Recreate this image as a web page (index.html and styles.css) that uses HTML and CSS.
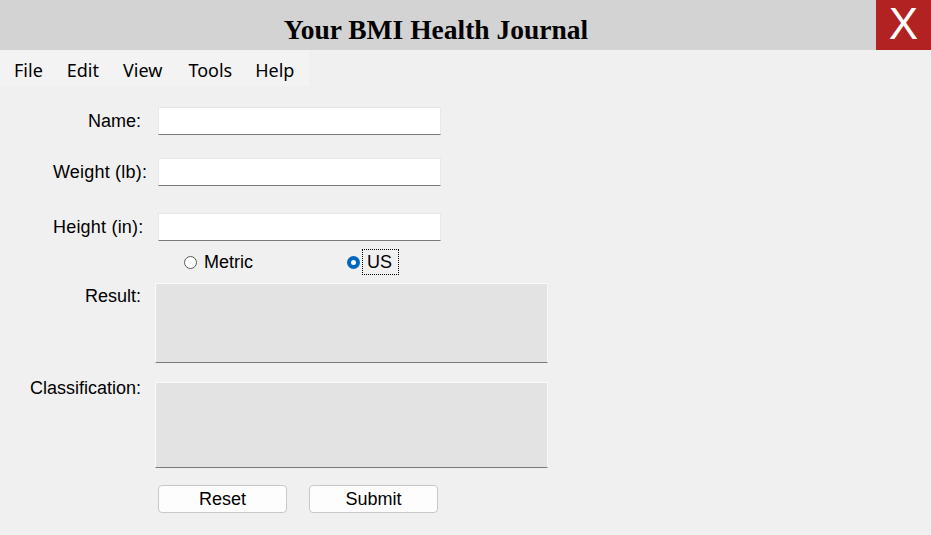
FILE: index.html
```html
<!DOCTYPE html>
<html>
<head>
<meta charset="utf-8">
<link rel="stylesheet" href="styles.css">
</head>
<body>
<header class="titlebar">
  <h1 class="title">Your BMI Health Journal</h1>
  <div class="close">X</div>
</header>
<nav class="menubar">
  <span class="menu-item">File</span>
  <span class="menu-item">Edit</span>
  <span class="menu-item">View</span>
  <span class="menu-item">Tools</span>
  <span class="menu-item">Help</span>
</nav>
<main class="form">
  <div class="row row-name">
    <label class="label">Name:</label>
    <div class="input"></div>
  </div>
  <div class="row row-weight">
    <label class="label label-wide">Weight (lb):</label>
    <div class="input"></div>
  </div>
  <div class="row row-height">
    <label class="label label-wide">Height (in):</label>
    <div class="input"></div>
  </div>
  <div class="radios">
    <div class="radio-item radio-metric">
      <span class="radio"></span>
      <span class="radio-text">Metric</span>
    </div>
    <div class="radio-item radio-us">
      <span class="radio radio-on"></span>
      <span class="radio-text focus">US</span>
    </div>
  </div>
  <div class="row row-result">
    <label class="label label-top">Result:</label>
    <div class="output output-result"></div>
  </div>
  <div class="row row-class">
    <label class="label label-top">Classification:</label>
    <div class="output output-class"></div>
  </div>
  <div class="buttons">
    <button class="btn">Reset</button>
    <button class="btn">Submit</button>
  </div>
</main>
</body>
</html>
```
FILE: styles.css
```css
* { box-sizing: border-box; }
html, body { margin: 0; padding: 0; }
body {
  background: #f0f0f0;
  width: 931px;
  height: 535px;
  overflow: hidden;
  font-family: "Liberation Sans", Arial, sans-serif;
  color: #000;
}
.titlebar {
  display: flex;
  height: 50px;
  background: #d3d3d3;
}
.title {
  flex: 1;
  margin: 0;
  text-align: center;
  font-family: "Liberation Serif", "Times New Roman", serif;
  font-weight: bold;
  font-size: 27.5px;
  line-height: 60px;
  padding-right: 4px;
}
.close {
  width: 55px;
  height: 50px;
  display: flex;
  align-items: center;
  justify-content: center;
  background: #b22222;
  color: #fff;
  font-family: "Liberation Sans", Arial, sans-serif;
  font-size: 44px;
  line-height: 44px;
  padding-bottom: 3px;
}
.menubar {
  display: flex;
  width: 309px;
  height: 36px;
  background: #f3f3f3;
  padding-left: 14px;
  font-family: "Noto Sans", "Open Sans", sans-serif;
  font-size: 18px;
  line-height: 40px;
}
.menu-item:nth-child(1) { margin-right: 24px; }
.menu-item:nth-child(2) { margin-right: 24px; }
.menu-item:nth-child(3) { margin-right: 26px; }
.menu-item:nth-child(4) { margin-right: 23px; }
.form {
  display: flex;
  flex-direction: column;
  font-size: 18px;
}
.row {
  display: flex;
  align-items: center;
}
.label {
  width: 155px;
  padding-right: 14px;
  text-align: right;
}
.label-wide {
  text-align: left;
  padding-left: 53px;
  padding-right: 0;
  letter-spacing: 0.2px;
}
.label-top { align-self: flex-start; padding-top: 3px; }
.input {
  margin-left: 3px;
  width: 283px;
  height: 28px;
  background: #fff;
  border: 1px solid #e8e8e8;
  border-bottom: 1px solid #7a7a7a;
}
.row-name { margin-top: 21px; }
.row-weight { margin-top: 23px; }
.row-height { margin-top: 27px; }
.radios {
  display: flex;
  align-items: center;
  height: 34px;
  margin-top: 4px;
  padding-left: 184px;
}
.radio-item { display: flex; align-items: center; }
.radio-us { margin-left: 94px; }
.radio {
  width: 13px;
  height: 13px;
  border-radius: 50%;
  border: 1px solid #5a5a5a;
  background: #fff;
  margin-right: 7px;
}
.radio-on {
  border: 4px solid #0067c0;
  background: #fff;
  margin-right: 2px;
}
.radio-text { line-height: 20px; }
.focus {
  border: 1px dotted #000;
  padding: 2px 6px 2px 4px;
  line-height: 20px;
}
.output {
  width: 393px;
  background: #e3e3e3;
  border-top: 1px solid #fafafa;
  border-left: 1px solid #fafafa;
  border-right: 1px solid #f5f5f5;
  border-bottom: 1px solid #7a7a7a;
}
.row-result { margin-top: 4px; }
.output-result { height: 80px; }
.row-class { margin-top: 19px; }
.output-class { height: 86px; }
.row-class .label-top { padding-top: 0; margin-top: -4px; }
.buttons {
  display: flex;
  gap: 22px;
  padding-left: 158px;
  margin-top: 17px;
}
.btn {
  width: 129px;
  height: 28px;
  background: #fdfdfd;
  border: 1px solid #c8c8c8;
  border-radius: 4px;
  font-family: "Liberation Sans", Arial, sans-serif;
  font-size: 18px;
  color: #000;
  padding: 0;
  line-height: 26px;
}
```
